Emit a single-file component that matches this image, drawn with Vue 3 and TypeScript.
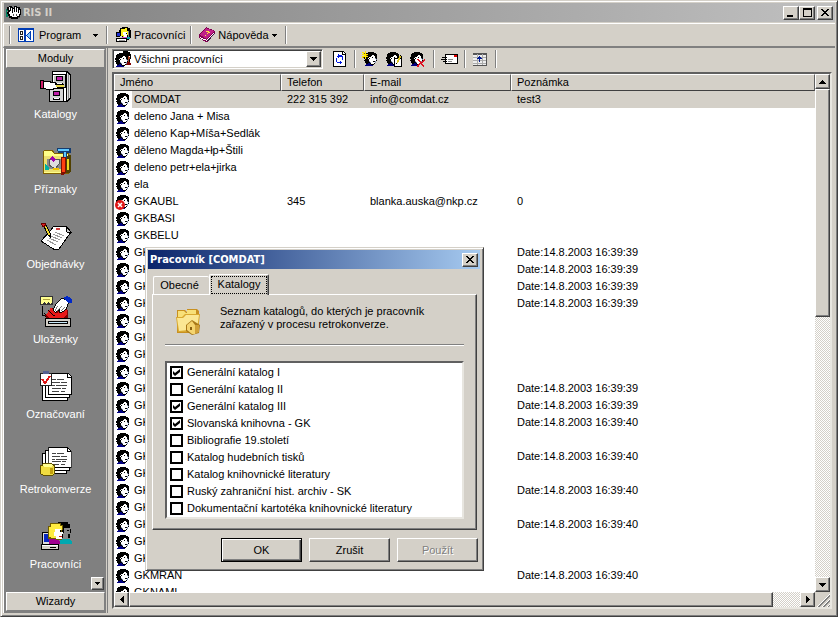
<script setup lang="ts">
import { ref } from 'vue'

interface Worker {
  name: string
  phone?: string
  mail?: string
  note?: string
  blocked?: boolean
}

interface Catalogue {
  label: string
  checked: boolean
}

const stamp39 = 'Date:14.8.2003 16:39:39'
const stamp40 = 'Date:14.8.2003 16:39:40'

const workers: Worker[] = [
  { name: 'COMDAT', phone: '222 315 392', mail: 'info@comdat.cz', note: 'test3' },
  { name: 'deleno Jana + Misa' },
  { name: 'děleno Kap+Míša+Sedlák' },
  { name: 'děleno Magda+łp+Štili' },
  { name: 'deleno petr+ela+jirka' },
  { name: 'ela' },
  { name: 'GKAUBL', phone: '345', mail: 'blanka.auska@nkp.cz', note: '0', blocked: true },
  { name: 'GKBASI' },
  { name: 'GKBELU' },
  { name: 'GKCIDE', note: stamp39 },
  { name: 'GK', note: stamp39 },
  { name: 'GK', note: stamp39 },
  { name: 'GK', note: stamp39 },
  { name: 'GK' },
  { name: 'GK' },
  { name: 'GK' },
  { name: 'GK' },
  { name: 'GK', note: stamp39 },
  { name: 'GK', note: stamp39 },
  { name: 'GK', note: stamp40 },
  { name: 'GK' },
  { name: 'GK', note: stamp40 },
  { name: 'GK' },
  { name: 'GK', note: stamp40 },
  { name: 'GK' },
  { name: 'GK', note: stamp40 },
  { name: 'GK' },
  { name: 'GK' },
  { name: 'GKMRAN', note: stamp40 },
  { name: 'GKNAMI' },
]

const selected = ref(0)

const modules = [
  { id: 'cabinet', label: 'Katalogy' },
  { id: 'tools', label: 'Příznaky' },
  { id: 'letter', label: 'Objednávky' },
  { id: 'scanner', label: 'Uloženky' },
  { id: 'marks', label: 'Označovaní' },
  { id: 'retro', label: 'Retrokonverze' },
  { id: 'people', label: 'Pracovníci' },
]

const catalogues = ref<Catalogue[]>([
  { label: 'Generální katalog I', checked: true },
  { label: 'Generální katalog II', checked: false },
  { label: 'Generální katalog III', checked: true },
  { label: 'Slovanská knihovna - GK', checked: true },
  { label: 'Bibliografie 19.století', checked: false },
  { label: 'Katalog hudebních tisků', checked: false },
  { label: 'Katalog knihovnické literatury', checked: false },
  { label: 'Ruský zahraniční hist. archiv - SK', checked: false },
  { label: 'Dokumentační kartotéka knihovnické literatury', checked: false },
])

// Pixel art for the 16px head: k = hair, w = face, b = clothes, g = shade
const headRows = [
  '................',
  '.....kkkkkk.....',
  '...kkkkkkkkkk...',
  '..kkkkkkkkkkkk..',
  '..kkkkkkkwwkkk..',
  '..kkkkkkwwwwkk..',
  '.kkkkkwwwkwwkk..',
  '.kkkkwkwwwwwgk..',
  '..kkkkwwwwwwwg..',
  '.kkkkkwwwwwwwk..',
  '..kkkkgwwwkkg...',
  '..kkkkkgwwwwg...',
  '...kkbbkwwwk....',
  '...bbbbbkkk.....',
  '..bbbbbbbb......',
  '................',
]

function layer(rows: string[], ch: string): string {
  let d = ''
  rows.forEach((row, y) => {
    for (let x = 0; x < row.length; x++) {
      if (row[x] !== ch) continue
      let end = x
      while (row[end + 1] === ch) end++
      d += `M${x} ${y}h${end - x + 1}v1h${x - end - 1}z`
      x = end
    }
  })
  return d
}

const head = [
  { fill: '#000', d: layer(headRows, 'k') },
  { fill: '#fff', d: layer(headRows, 'w') },
  { fill: '#000080', d: layer(headRows, 'b') },
  { fill: '#8090b0', d: layer(headRows, 'g') },
]
</script>

<template>
  <svg class="sprite" aria-hidden="true">
    <symbol id="head" viewBox="0 0 16 16">
      <path v-for="p in head" :key="p.fill" :fill="p.fill" :d="p.d" />
    </symbol>
    <symbol id="heads" viewBox="0 0 16 16">
      <path d="M8 0h5v1h2v2h1v5h-1v3h-4L8 7z" fill="#000" />
      <path d="M13 5h2v3h-1v3h-3V8h2z" fill="#a04020" /><path d="M14 5h1v1h-1z" fill="#fff" />
      <path d="M11 11h4v1h1v2h-5z" fill="#800000" />
      <use href="#head" x="-1" y="1" width="16" height="16" />
    </symbol>
    <symbol id="logo" viewBox="0 0 16 16">
      <path d="M0 4h3v2H1v3H0zM0 9h2v3H0z" fill="#008060" />
      <path d="M3 1h3v1h1v1h1V1h3v1h3v2h1v6h-1v3h-2v1H5v-1H3v-2H2V9H1V7h1V5H1V2h2z" fill="#000" />
      <path d="M2 3h1v2h1v2H3v2h1v2h2v1h5v-1h2V9h1V5h-1v3h-1V3h-1v4h-1V2H9v5H8V4H7v4H6V3H5v3H4V2H3v1z" fill="#fff" />
      <path d="M7 9h1v2H7zM10 9h1v2h-1zM12 12h2v1h-2z" fill="#555" />
    </symbol>
    <symbol id="program" viewBox="0 0 16 14">
      <path d="M0 0h16v14H0z" fill="#003cb4" /><path d="M1 2h14v11H1z" fill="#fff" />
      <path d="M6 2h2v11H6z" fill="#003cb4" />
      <path d="M2 3h3v4H2zM2 8h3v4H2z" fill="#222" /><path d="M3 4h1v2H3zM3 9h1v2H3z" fill="#fff" />
      <path d="M13 3h-1L8 7v1l4 4h1z" fill="#003cb4" /><path d="M12 5v5L9 8V7z" fill="#7cc4ff" />
    </symbol>
    <symbol id="staff" viewBox="0 0 16 16">
      <path d="M5 1h2V0h6v1h2v2h1v8h-2v2H7V9H4V3h1z" fill="#000" />
      <path d="M6 2h4V1h2v3h1v4h-2v3H8V9H6z" fill="#ffef20" />
      <path d="M8 5h4v5H9V8H8z" fill="#fff" /><path d="M11 6h1v1h-1z" fill="#000" />
      <path d="M13 4h1v6h-1z" fill="#888" />
      <path d="M1 5h4v5H1z" fill="#000" /><path d="M2 6h3v3H2z" fill="#2030d0" />
      <path d="M7 10h5v2H7z" fill="#d048d0" /><path d="M12 10h3v2h-3z" fill="#00a0b0" />
      <path d="M1 11h11v4H1z" fill="#000" /><path d="M2 12h9v2H2z" fill="#fff" /><path d="M4 13h6v1H4z" fill="#999" />
    </symbol>
    <symbol id="book" viewBox="0 0 16 16">
      <path d="M0 8L7 0l9 4v2l-7 9h-2L0 11z" fill="#800050" />
      <path d="M1 8l6-7 8 3-7 8z" fill="#c02088" /><path d="M1 10l7 3 7-8v1l-7 8-7-3z" fill="#fff" />
      <path d="M7 4h3v1h1v1H9v1H8V6h1V5H7zM6 8h1v1H6z" fill="#ffe840" />
      <path d="M8 14l8-9v1l-7 9z" fill="#401040" />
    </symbol>
    <symbol id="refresh" viewBox="0 0 13 16">
      <path d="M0 0h10l3 3v13H0z" fill="#000" /><path d="M1 1h8v3h3v11H1z" fill="#fff" />
      <path d="M10 1l2 2h-2z" fill="#fff" />
      <path d="M5 3h1v1h3v1h1v4H9V6H6v1H5V6H4V5h1V4zM3 7h1v4h3v-1h1v1h1v1H8v1H7v-1H4v-1H3z" fill="#0018e0" />
    </symbol>
    <symbol id="head-new" viewBox="0 0 16 16">
      <use href="#head" x="1" width="16" height="16" />
      <path d="M0 1h2v2h1V0h1v3h2v1H5v1h1v1H4v2H3V6H1v1H0V5h2V4H0V3h1V2H0z" fill="#ffe600" />
      <path d="M2 2h1v1H2zM4 4h1v1H4zM1 6h1v1H1z" fill="#807000" />
    </symbol>
    <symbol id="head-edit" viewBox="0 0 16 16">
      <use href="#head" x="-1" width="16" height="16" />
      <path d="M8 7h8v9H8z" fill="#000" /><path d="M9 8h6v7H9z" fill="#fff" />
      <path d="M13 5h2v2h-1v2h-1v2h-1v1h-1v-3h1V7h1z" fill="#e0c820" /><path d="M14 4h1v1h-1zM15 5h1v2h-1zM10 12h1v1h-1z" fill="#000" />
    </symbol>
    <symbol id="head-del" viewBox="0 0 16 16">
      <use href="#head" x="-1" width="16" height="16" />
      <path d="M7 8h2v1h1v1h1v1h1v-1h1V9h1V8h1v2h-1v1h-1v1h-1v1h1v1h1v2h-1v-1h-1v-1h-1v-1h-1v1H9v2H7v-2h1v-1h1v-1h1v-1H9v-1H8v-1H7z" fill="#e01020" />
    </symbol>
    <symbol id="mail" viewBox="0 0 17 10">
      <path d="M4 0h13v10H4z" fill="#000" /><path d="M5 1h11v8H5z" fill="#fff" />
      <path d="M13 1h3v2h-3z" fill="#e00000" /><path d="M7 5h5v1H7zM7 7h4v1H7z" fill="#888" />
      <path d="M1 3h5v1H1zM0 5h6v1H0zM2 7h4v1H2z" fill="#000" />
    </symbol>
    <symbol id="fields" viewBox="0 0 14 13">
      <path d="M0 0h14v13H0z" fill="#555" /><path d="M0 2h13v10H0z" fill="#eee" />
      <path d="M0 4h13v1H0zM0 7h13v1H0zM0 10h13v1H0zM4 1h1v11H4zM9 1h1v11H9z" fill="#aaa" />
      <path d="M6 3h1v1h1v1h1v1H7v3H6V6H4V5h1V4h1z" fill="#001890" />
    </symbol>
    <symbol id="blocked" viewBox="0 0 10 10">
      <circle cx="5" cy="5" r="5" fill="#e01818" /><path d="M3 3l4 4M7 3L3 7" stroke="#fff" stroke-width="1.5" />
    </symbol>

    <symbol id="cabinet" viewBox="0 0 32 32">
      <path d="M12 1h15l4 3v24l-3 4H9V18h3z" fill="#000" />
      <path d="M13 2h13v2H13z" fill="#fff" /><path d="M27 3l3 2v22l-3 4z" fill="#ddd" /><path d="M28 4h1v25h-1z" fill="#888" />
      <path d="M13 5h12v12H13z" fill="#c4c4c4" /><path d="M10 19h13v12H10z" fill="#d4d4d4" /><path d="M24 18h2v13h-2z" fill="#fff" />
      <path d="M13 5h12v1H14v11h-1z" fill="#fff" /><path d="M16 6h7v5h-7zM13 21h7v5h-7z" fill="#000" />
      <path d="M17 7h5v3h-5zM14 22h5v3h-5z" fill="#c020a8" />
      <path d="M16 13h7v2h-7zM13 28h7v2h-7z" fill="#000" /><path d="M17 13h5v1h-5zM14 28h5v1h-5z" fill="#fff" />
      <path d="M3 11h7v1h5v2h8v2h-6v2h-4v1H6l-3-1z" fill="#fff" stroke="#000" />
      <path d="M16 15h8v2h-8z" fill="#e8d848" /><path d="M0 10h4v9H0z" fill="#000" /><path d="M1 11h2v7H1z" fill="#d0206c" />
    </symbol>
    <symbol id="tools" viewBox="0 0 32 32">
      <path d="M3 7l2-2h7l2 3h14v20H3z" fill="#ffff88" stroke="#806000" /><path d="M4 11h23v16H4z" fill="#ece070" />
      <path d="M28 10h3v16l-2 2h-7z" fill="#504000" />
      <path d="M7 14h14v10H7z" fill="#888" /><path d="M9 14h10v5l-4 5-6-4z" fill="#ddd" stroke="#555" />
      <path d="M5 19l4 3v3H5z" fill="#00b0a0" /><path d="M12 11l4 3-3 3-3-3z" fill="#a000a8" /><path d="M13 23h6v2h-6z" fill="#f0c000" />
      <path d="M17 3h14v5h-4v6h-4V8h-5z" fill="#143c70" /><path d="M18 4h11v2H18zM24 7h2v7h-2z" fill="#60c8ff" />
      <path d="M21 12h5v15l-2 3h-3z" fill="#801000" /><path d="M22 13h3v14h-3z" fill="#ff4010" />
      <path d="M27 14h2v11h-2z" fill="#f0d820" />
    </symbol>
    <symbol id="letter" viewBox="0 0 32 32">
      <path d="M14 6l13 1 4 5-12 17-4 1L1 21l9-10z" fill="#fff" stroke="#000" />
      <path d="M26 7l1 5h4z" fill="#ccc" stroke="#000" />
      <path d="M15 12l9 4M13 14l9 4M11 16l9 4M9 18l9 4M7 20l9 5" stroke="#999" /><path d="M16 8h4v2h-4z" fill="#d04040" />
      <path d="M3 4l5 11 2 2V13L5 3z" fill="#f4dc30" stroke="#000" /><path d="M1 3h4l1 2-3 2z" fill="#e02020" stroke="#600" />
      <path d="M8 15l2 3v-3z" fill="#000" />
    </symbol>
    <symbol id="scanner" viewBox="0 0 32 33">
      <path d="M0 1h13v9H0z" fill="#333" /><path d="M1 2h11v6l-2 1-2-2-2 2-2-2-2 2H1z" fill="#ffff90" /><path d="M3 4h7v1H3z" fill="#b0a040" />
      <path d="M2 11v10h4M4 19l2 2-2 2" fill="none" stroke="#000" />
      <path d="M11 14l15-3 2 5v9H7l-2-4z" fill="#800000" /><path d="M11 13l5 6 10-6 2 7-5 4H9l-3-4z" fill="#e81818" />
      <path d="M8 16l7 6" stroke="#000" />
      <path d="M13 15l4-7 6-5 6 4-2 7-5 4h-3l1-3-5 3z" fill="#fff" stroke="#000" />
      <path d="M18 11l-3 5M22 11l-4 5M25 12l-4 5" stroke="#777" />
      <path d="M24 2l4-1 4 3v4h-3l-4-3z" fill="#0028c8" />
      <path d="M5 24h26v9H5z" fill="#000" /><path d="M6 25h24v7H6z" fill="#d4d0c8" /><path d="M8 27h20v3H8z" fill="#000" /><path d="M9 28h18v1H9z" fill="#c8e8f8" />
    </symbol>
    <symbol id="sheet" viewBox="0 0 24 24">
      <path d="M0 0h20l4 4v18H0z" fill="#000" /><path d="M1 1h18v4h4v16H1z" fill="#fff" /><path d="M20 1l3 3h-3z" fill="#fff" />
      <path d="M4 6h4v1H4zM9 6h7v1H9zM4 9h8v1H4zM13 9h6v1h-6zM4 12h3v1H4zM8 12h11v1H8zM4 15h9v1H4zM14 15h4v1h-4zM4 18h7v1H4zM13 18h4v1h-4z" fill="#444" />
    </symbol>
    <symbol id="marks" viewBox="0 0 32 32">
      <path d="M2 12h26v19H2z" fill="#000" /><path d="M3 13h24v17H3z" fill="#fff" />
      <path d="M5 9h25v19H5z" fill="#000" /><path d="M6 10h23v17H6z" fill="#fff" />
      <use href="#sheet" x="8" y="3" width="24" height="24" />
      <path d="M0 3h12v13H0z" fill="#222" /><path d="M1 4h10v11H1z" fill="#fff" /><path d="M3 1h6v3H3z" fill="#556090" />
      <path d="M2 9l3 4 5-7" fill="none" stroke="#e01818" stroke-width="2" />
    </symbol>
    <symbol id="retro" viewBox="0 0 32 33">
      <path d="M2 8h25v22H2z" fill="#000" /><path d="M3 9h23v20H3z" fill="#fff" />
      <path d="M5 5h25v22H5z" fill="#000" /><path d="M6 6h23v20H6z" fill="#fff" />
      <use href="#sheet" x="8" y="2" width="24" height="24" />
      <path d="M0 21l3-2h9l3 2v9l-3 2H3l-3-2z" fill="#605000" /><path d="M1 22h13v8l-3 1H4l-3-1z" fill="#f0dc40" />
      <path d="M3 20h9l1 1-2 2H4l-2-2z" fill="#ffff90" /><path d="M10 24h3v6h-3z" fill="#c0a010" />
    </symbol>
    <symbol id="people" viewBox="0 0 32 32">
      <path d="M2 12h12v14H2z" fill="#000" /><path d="M3 13h10v11H3z" fill="#ddd" /><path d="M4 14h8v8H4z" fill="#0828c0" />
      <path d="M18 2h10v2h2v5h1v4h-1v5H18z" fill="#000" /><path d="M24 8h6v6h-2v5h-5z" fill="#888" /><path d="M27 10h2v1h-2z" fill="#000" />
      <path d="M20 19h9l3 3v2H20z" fill="#00a8b0" />
      <path d="M10 3h11v2h2v5h-1v10H10v-1H8V6h2z" fill="#705c00" /><path d="M11 4h9v2h2v4h-4v8h-7v-1H9V7h2z" fill="#ffec40" />
      <path d="M15 9h6v3h2v2h-1v5h-6v-3h-2v-4h1z" fill="#fff" /><path d="M20 10h1v2h-1z" fill="#000" /><path d="M19 16h3v1h-3z" fill="#d02020" />
      <path d="M9 19h6l5 2v3H9z" fill="#a00090" />
      <path d="M1 24h18v6H1z" fill="#000" /><path d="M2 25h16v4H2z" fill="#d4d0c8" /><path d="M10 27h6v1h-6z" fill="#000" /><path d="M2 25h16v1H2z" fill="#fff" />
    </symbol>
    <symbol id="folder" viewBox="0 0 26 28">
      <path d="M2 3h8l2 2V2h10l2 2v19l-4 3H2z" fill="#c89020" /><path d="M3 4h6l2 2h1V3h9v19H3z" fill="#f8e078" />
      <path d="M1 10h6l3-3h15l-2 18H3z" fill="#d8a830" /><path d="M2 11h6l3-3h13l-2 14-18 2z" fill="#fbe794" />
      <path d="M11 18l6-5 8 5-1 8-7 2-6-4z" fill="#a87818" /><path d="M12 18l5-4 3 4v9l-3 0-5-4z" fill="#f4d470" /><path d="M20 18l4 0v7l-4 2z" fill="#d0a038" /><path d="M15 20h2v3h-2z" fill="#886010" />
    </symbol>
    <symbol id="down" viewBox="0 0 7 4"><path d="M0 0h7v1H6v1H5v1H4v1H3V3H2V2H1V1H0z" fill="currentColor" /></symbol>
    <symbol id="small-down" viewBox="0 0 5 3"><path d="M0 0h5v1H4v1H3v1H2V2H1V1H0z" fill="currentColor" /></symbol>
    <symbol id="up" viewBox="0 0 7 4"><path d="M3 0h1v1h1v1h1v1h1v1H0V3h1V2h1V1h1z" fill="currentColor" /></symbol>
    <symbol id="left" viewBox="0 0 4 7"><path d="M3 0h1v7H3V6H2V5H1V4H0V3h1V2h1V1h1z" fill="currentColor" /></symbol>
    <symbol id="right" viewBox="0 0 4 7"><path d="M0 0h1v1h1v1h1v1h1v1H3v1H2v1H1v1H0z" fill="currentColor" /></symbol>
    <symbol id="cross" viewBox="0 0 8 7"><path d="M0 0h2v1h1v1h2V1h1V0h2v1H7v1H6v1H5v1h1v1h1v1h1v1H6V6H5V5H3v1H2v1H0V6h1V5h1V4h1V3H2V2H1V1H0z" fill="#000" /></symbol>
  </svg>

  <main class="window">
    <header class="titlebar">
      <svg class="i16"><use href="#logo" /></svg>
      <h1>RIS II</h1>
      <button class="cap" type="button" aria-label="Minimize"><span class="min"></span></button>
      <button class="cap" type="button" aria-label="Maximize"><span class="max"></span></button>
      <button class="cap close" type="button" aria-label="Close"><svg class="cross"><use href="#cross" /></svg></button>
    </header>

    <nav class="menubar">
      <span class="sep"></span>
      <button class="menu main" type="button"><svg class="program"><use href="#program" /></svg><span>Program</span><svg class="tri"><use href="#small-down" /></svg></button>
      <span class="sep"></span>
      <button class="menu" type="button"><svg class="i16"><use href="#staff" /></svg><span>Pracovníci</span></button>
      <span class="sep"></span>
      <button class="menu arrow" type="button"><svg class="i16"><use href="#book" /></svg><span>Nápověda</span><svg class="tri"><use href="#small-down" /></svg></button>
      <span class="sep"></span>
    </nav>

    <div class="body">
      <aside class="sidebar">
        <button class="group" type="button">Moduly</button>
        <ul class="modules">
          <li v-for="m in modules" :key="m.id">
            <button type="button" class="module"><svg class="i32"><use :href="'#' + m.id" /></svg><span>{{ m.label }}</span></button>
          </li>
        </ul>
        <button class="scroll more" type="button" aria-label="Další"><svg class="tri"><use href="#small-down" /></svg></button>
        <button class="group" type="button">Wizardy</button>
      </aside>

      <section class="content">
        <div class="toolbar">
          <label class="combo">
            <svg class="i16"><use href="#heads" /></svg>
            <select aria-label="Filtr"><option>Všichni pracovníci</option></select>
            <span class="drop"><svg class="v"><use href="#down" /></svg></span>
          </label>
          <button class="tool" type="button" aria-label="Obnovit"><svg class="refresh"><use href="#refresh" /></svg></button>
          <span class="sep"></span>
          <button class="tool" type="button" aria-label="Nový"><svg class="i16"><use href="#head-new" /></svg></button>
          <button class="tool" type="button" aria-label="Upravit"><svg class="i16"><use href="#head-edit" /></svg></button>
          <button class="tool" type="button" aria-label="Smazat"><svg class="i16"><use href="#head-del" /></svg></button>
          <span class="sep"></span>
          <button class="tool" type="button" aria-label="Pošta"><svg class="mail"><use href="#mail" /></svg></button>
          <span class="sep"></span>
          <button class="tool" type="button" aria-label="Sloupce"><svg class="fields"><use href="#fields" /></svg></button>
          <span class="sep"></span>
        </div>

        <div class="listview">
          <div class="rows">
            <table>
              <colgroup><col class="c-icon" /><col class="c-name" /><col class="c-phone" /><col class="c-mail" /><col /></colgroup>
              <thead>
                <tr><th colspan="2">Jméno</th><th>Telefon</th><th>E-mail</th><th>Poznámka</th></tr>
              </thead>
              <tbody>
                <tr v-for="(w, i) in workers" :key="i" :class="{ selected: i === selected }" @click="selected = i">
                  <td class="icon">
                    <svg class="i16"><use href="#head" /></svg>
                    <svg v-if="w.blocked" class="badge"><use href="#blocked" /></svg>
                  </td>
                  <td class="name">{{ w.name }}</td>
                  <td>{{ w.phone }}</td>
                  <td>{{ w.mail }}</td>
                  <td>{{ w.note }}</td>
                </tr>
              </tbody>
            </table>
          </div>
          <div class="vbar">
            <button class="scroll" type="button" aria-label="Nahoru"><svg class="v"><use href="#up" /></svg></button>
            <div class="vthumb"></div><div class="vrest"></div>
            <button class="scroll" type="button" aria-label="Dolů"><svg class="v"><use href="#down" /></svg></button>
          </div>
          <div class="hbar">
            <button class="scroll" type="button" aria-label="Vlevo"><svg class="h"><use href="#left" /></svg></button>
            <div class="hthumb"></div><div class="hrest"></div>
            <button class="scroll" type="button" aria-label="Vpravo"><svg class="h"><use href="#right" /></svg></button>
          </div>
          <svg class="grip" viewBox="0 0 15 15"><path d="M2 15L15 2M7 15l8-8M12 15l3-3" stroke="#fff" /><path d="M3 15L15 3M4 15L15 4M8 15l7-7M9 15l6-6M13 15l2-2" stroke="#808080" /></svg>
        </div>
      </section>
    </div>

    <section class="dialog" role="dialog" aria-labelledby="dlg-title">
      <header class="dlg-title">
        <h2 id="dlg-title">Pracovník [COMDAT]</h2>
        <button class="cap" type="button" aria-label="Zavřít"><svg class="cross"><use href="#cross" /></svg></button>
      </header>
      <div class="tabs" role="tablist">
        <button class="tab" type="button" role="tab" aria-selected="false">Obecné</button>
        <button class="tab active" type="button" role="tab" aria-selected="true"><span>Katalogy</span></button>
      </div>
      <div class="panel" role="tabpanel">
        <div class="intro">
          <svg class="folder"><use href="#folder" /></svg>
          <p>Seznam katalogů, do kterých je pracovník<br />zařazený v procesu retrokonverze.</p>
        </div>
        <hr />
        <ul class="checks">
          <li v-for="c in catalogues" :key="c.label">
            <label><input v-model="c.checked" type="checkbox" /><span>{{ c.label }}</span></label>
          </li>
        </ul>
      </div>
      <footer class="actions">
        <button class="btn default" type="button">OK</button>
        <button class="btn" type="button">Zrušit</button>
        <button class="btn" type="button" disabled>Použít</button>
      </footer>
    </section>
  </main>
</template>

<style>
body {
  background: #d4d0c8;
}
</style>

<style scoped>
* {
  box-sizing: border-box;
}

.sprite {
  position: absolute;
  width: 0;
  height: 0;
}

svg {
  display: block;
  flex: none;
  shape-rendering: crispEdges;
}

button,
select,
input {
  margin: 0;
  padding: 0;
  border: 0;
  background: none;
  color: inherit;
  font: inherit;
}

h1,
h2,
p,
ul {
  margin: 0;
  padding: 0;
  list-style: none;
}

.window {
  position: relative;
  display: flex;
  flex-direction: column;
  height: 100vh;
  padding: 2px 2px 3px;
  background: #d4d0c8;
  border: 1px solid;
  border-color: #d4d0c8 #404040 #404040 #d4d0c8;
  box-shadow: inset 1px 1px #fff, inset -1px -1px #808080;
  font: 11px/13px "Liberation Sans", Arial, sans-serif;
  color: #000;
}

.i16 { width: 16px; height: 16px; }
.i32 { width: 32px; height: 32px; }
.program { width: 16px; height: 14px; }
.refresh { width: 13px; height: 16px; }
.mail { width: 17px; height: 10px; }
.fields { width: 14px; height: 13px; }
.tri { width: 5px; height: 3px; }
.v { width: 7px; height: 4px; }
.h { width: 4px; height: 7px; }
.cross { width: 8px; height: 7px; }

.titlebar {
  display: flex;
  align-items: center;
  flex: none;
  height: 20px;
  margin-left: 1px;
  padding: 0 2px;
  background: linear-gradient(90deg, #808080, #c0c0c0);
  border-bottom: 1px solid #d4d0c8;
}

h1 {
  flex: 1;
  color: #d4d0c8;
  font: bold 11px/13px "DejaVu Sans Condensed", Tahoma, sans-serif;
  padding-left: 1px;
}

.cap,
.scroll,
.drop {
  display: flex;
  align-items: center;
  justify-content: center;
  flex: none;
  background: #d4d0c8;
  border: 1px solid;
  border-color: #fff #404040 #404040 #fff;
  box-shadow: inset -1px -1px #808080;
}

.cap {
  width: 16px;
  height: 14px;
}

.cap.close {
  margin-left: 2px;
}

.min {
  width: 6px;
  height: 2px;
  margin: 6px 2px 0 0;
  background: #000;
}

.max {
  width: 9px;
  height: 9px;
  border: 1px solid #000;
  border-top-width: 2px;
}

.menubar {
  display: flex;
  align-items: center;
  flex: none;
  height: 25px;
  padding: 0 5px;
  border-top: 1px solid #fff;
  border-bottom: 2px solid #808080;
  border-left: 1px solid #fff;
}

.menu {
  display: flex;
  align-items: center;
  gap: 3px;
  height: 22px;
  padding: 0 5px 0 7px;
}

.menu.main {
  width: 95px;
  padding-right: 8px;
}

.menu.main .program {
  margin-right: 2px;
}

.menu.main .tri {
  margin-left: auto;
}

.menu.arrow {
  padding-right: 8px;
}

.sep {
  flex: none;
  width: 2px;
  height: 18px;
  border-left: 1px solid #808080;
  border-right: 1px solid #fff;
}

.body {
  display: flex;
  flex: 1;
  min-height: 0;
}

.sidebar {
  display: flex;
  flex-direction: column;
  flex: none;
  width: 104px;
  padding: 1px 1px 2px 2px;
  background: #808080;
  border-left: 1px solid #fff;
  border-right: 1px solid #d4d0c8;
}

.group {
  flex: none;
  height: 19px;
  background: #d4d0c8;
  border: 1px solid;
  border-color: #fff #808080 #808080 #fff;
}

.modules {
  flex: 1;
  min-height: 0;
}

.module {
  display: flex;
  flex-direction: column;
  align-items: center;
  gap: 6px;
  width: 100%;
  height: 75px;
  padding-top: 2px;
  color: #fff;
}

.more {
  align-self: flex-end;
  margin: 0 1px 2px;
}

.content {
  display: flex;
  flex-direction: column;
  flex: 1;
  min-width: 0;
  padding: 1px 3px 4px 4px;
  border-left: 1px solid #808080;
}

.toolbar {
  display: flex;
  align-items: center;
  flex: none;
  height: 20px;
  margin-bottom: 3px;
}

.combo {
  display: flex;
  align-items: center;
  width: 211px;
  height: 20px;
  padding: 1px 1px 1px 2px;
  margin-right: 4px;
  background: #fff;
  border: 1px solid;
  border-color: #808080 #fff #fff #808080;
  box-shadow: inset 1px 1px #404040, inset -1px -1px #d4d0c8;
}

.combo select {
  flex: 1;
  min-width: 0;
  padding-left: 3px;
  appearance: none;
  outline: 0;
}

.drop {
  width: 15px;
  height: 16px;
}

.tool {
  display: flex;
  align-items: center;
  justify-content: center;
  width: 24px;
  height: 20px;
}

.toolbar .sep {
  margin: 0 2px 0 3px;
}

.listview {
  display: grid;
  flex: 1;
  min-height: 0;
  grid-template-columns: minmax(0, 1fr) 15px;
  grid-template-rows: minmax(0, 1fr) 15px;
  background: #fff;
  border: 2px solid;
  border-color: #606060 #e8e6e0 #e8e6e0 #606060;
}

.rows {
  overflow: hidden;
}

table {
  width: 100%;
  table-layout: fixed;
  border-collapse: separate;
  border-spacing: 0;
}

.c-icon { width: 18px; }
.c-name { width: 149px; }
.c-phone { width: 83px; }
.c-mail { width: 147px; }

th {
  height: 17px;
  padding: 0 5px;
  text-align: left;
  font-weight: normal;
  line-height: 13px;
  background: #d4d0c8;
  border: 1px solid;
  border-color: #fff #606060 #404040 #fff;
}

td {
  height: 17px;
  padding: 0 6px;
  line-height: 13px;
  white-space: nowrap;
}

td.name {
  padding: 0 2px;
}

td.icon {
  position: relative;
  padding: 0 1px;
}

.badge {
  position: absolute;
  left: 1px;
  bottom: 0;
  width: 10px;
  height: 10px;
  shape-rendering: auto;
}

.selected td:not(.icon) {
  background: #d4d0c8;
}

.vbar {
  display: flex;
  flex-direction: column;
}

.hbar {
  display: flex;
}

.scroll {
  width: 15px;
  height: 15px;
}

.scroll.more {
  width: 13px;
  height: 13px;
}

.vthumb,
.hthumb {
  background: #d4d0c8;
  border: 1px solid;
  border-color: #fff #404040 #404040 #fff;
  box-shadow: inset -1px -1px #808080;
}

.vthumb { flex: 93; }
.vrest { flex: 107; }
.hthumb { flex: 96; }
.hrest { flex: 4; }

.vrest,
.hrest {
  background: repeating-conic-gradient(#fff 0 25%, #d4d0c8 0 50%) 0 0 / 2px 2px;
}

.grip {
  width: 15px;
  height: 15px;
  background: #d4d0c8;
}

.dialog {
  position: absolute;
  left: 144px;
  top: 246px;
  width: 339px;
  padding: 2px 3px 8px 2px;
  background: #d4d0c8;
  border: 1px solid;
  border-color: #d4d0c8 #404040 #404040 #d4d0c8;
  box-shadow: inset 1px 1px #fff, inset -1px -1px #808080;
}

.dlg-title {
  display: flex;
  align-items: center;
  height: 19px;
  padding: 0 2px;
  background: linear-gradient(90deg, #0a246a, #a6caf0);
}

h2 {
  flex: 1;
  color: #fff;
  font: bold 11px/13px "DejaVu Sans Condensed", Tahoma, sans-serif;
}

.tabs {
  display: flex;
  align-items: flex-end;
  height: 25px;
  padding: 0 5px;
}

.tab {
  width: 56px;
  height: 18px;
  padding-right: 4px;
  border: 1px solid #fff;
  border-width: 1px 0 0 1px;
  border-radius: 2px 2px 0 0;
}

.tab.active {
  position: relative;
  z-index: 1;
  width: 60px;
  height: 21px;
  margin-bottom: -1px;
  padding: 1px;
  background: #d4d0c8;
  border-right: 1px solid #404040;
  box-shadow: inset -1px 0 #808080;
}

.tab.active span {
  display: block;
  height: 18px;
  padding: 1px;
  border: 1px dotted #000;
}

.panel {
  margin: 0 3px 0 4px;
  padding: 10px 12px;
  border: 1px solid;
  border-color: #fff #404040 #404040 #fff;
  box-shadow: inset -1px -1px #808080;
}

.intro {
  display: flex;
  gap: 19px;
  height: 39px;
  padding-left: 10px;
}

.folder {
  width: 26px;
  height: 28px;
  margin-top: 2px;
  shape-rendering: auto;
}

hr {
  margin: 0 0 15px;
  border: 0;
  border-top: 1px solid #808080;
  border-bottom: 1px solid #fff;
}

.checks {
  padding: 1px 3px 0;
  background: #fff;
  border: 2px solid;
  border-color: #606060 #e8e6e0 #e8e6e0 #606060;
}

.checks label {
  display: flex;
  align-items: center;
  gap: 4px;
  height: 17px;
}

.checks input {
  width: 13px;
  height: 13px;
  appearance: none;
  background: #fff;
  border: 2px solid #000;
}

.checks input:checked::before {
  content: "";
  display: block;
  width: 7px;
  height: 7px;
  margin: 1px;
  background: #000;
  clip-path: polygon(0 2px, 2px 4px, 7px 0, 7px 3px, 2px 7px, 0 5px);
}

.actions {
  display: flex;
  justify-content: flex-end;
  gap: 7px;
  padding: 8px 2px 0;
}

.btn {
  width: 81px;
  height: 24px;
  border: 1px solid;
  border-color: #fff #404040 #404040 #fff;
  box-shadow: inset -1px -1px #808080;
}

.btn.default {
  border-color: #000;
  box-shadow: inset 1px 1px #fff, inset -1px -1px #404040, inset -2px -2px #808080;
}

.btn:disabled {
  color: #808080;
  text-shadow: 1px 1px #fff;
}
</style>
